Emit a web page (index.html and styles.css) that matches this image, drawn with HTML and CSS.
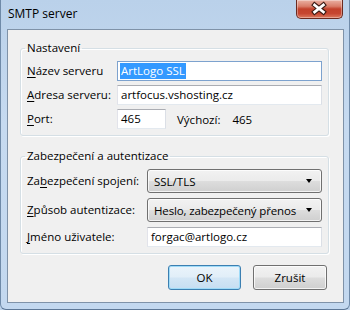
FILE: index.html
```html
<!DOCTYPE html>
<html lang="cs">
<head>
<meta charset="utf-8">
<title>SMTP server</title>
<link rel="stylesheet" href="styles.css">
</head>
<body>
<div class="window">
  <div class="titlebar">
    <span class="title">SMTP server</span>
    <div class="close">
      <svg width="47" height="19" viewBox="0 0 47 19">
        <g transform="translate(23.5 9.5)">
          <path d="M-4.5 -3.6 L4.5 3.6 M4.5 -3.6 L-4.5 3.6" stroke="#3b1a14" stroke-width="5" stroke-linecap="square" fill="none"/>
          <path d="M-4.5 -3.6 L4.5 3.6 M4.5 -3.6 L-4.5 3.6" stroke="#ffffff" stroke-width="2.8" stroke-linecap="square" fill="none"/>
        </g>
      </svg>
    </div>
  </div>
  <div class="client">
    <fieldset class="group g1">
      <legend>Nastavení</legend>
      <div class="row">
        <label class="lbl"><u>N</u>ázev serveru</label>
        <div class="input focus"><span class="sel">ArtLogo SSL</span></div>
      </div>
      <div class="row">
        <label class="lbl"><u>A</u>dresa serveru:</label>
        <div class="input">artfocus.vshosting.cz</div>
      </div>
      <div class="row">
        <label class="lbl"><u>P</u>ort:</label>
        <div class="input port">465</div>
        <span class="default-lbl">Výchozí:</span>
        <span class="default-val">465</span>
      </div>
    </fieldset>
    <fieldset class="group g2">
      <legend>Zabezpečení a autentizace</legend>
      <div class="row">
        <label class="lbl">Za<u>b</u>ezpečení spojení:</label>
        <div class="combo"><span>SSL/TLS</span><i class="arrow"></i></div>
      </div>
      <div class="row">
        <label class="lbl"><u>Z</u>působ autentizace:</label>
        <div class="combo"><span class="combo-txt">Heslo, zabezpečený přenos</span><i class="arrow"></i></div>
      </div>
      <div class="row">
        <label class="lbl"><u>J</u>méno uživatele:</label>
        <div class="input">forgac@artlogo.cz</div>
      </div>
    </fieldset>
    <div class="buttons">
      <button class="btn default">OK</button>
      <button class="btn">Zrušit</button>
    </div>
  </div>
</div>
</body>
</html>
```

FILE: styles.css
```css
html, body {
  margin: 0;
  padding: 0;
  background: #bcd2ea;
}
body {
  width: 350px;
  height: 310px;
  overflow: hidden;
  font-family: "Open Sans", "Noto Sans", sans-serif;
  font-size: 11.5px;
  color: #000;
}
.window {
  width: 350px;
  height: 310px;
  box-sizing: border-box;
  display: flex;
  flex-direction: column;
  background: linear-gradient(180deg, #bad1ea 0%, #c6daf0 40%, #c3d8ef 100%);
  border-left: 1px solid #6f8aa8;
  border-right: 1px solid #6f8aa8;
  border-bottom: 1px solid #5d7796;
  border-radius: 0 0 6px 6px;
  padding: 0 5px 6px 6px;
}
.titlebar {
  height: 29px;
  display: flex;
  align-items: flex-start;
  justify-content: space-between;
}
.title {
  margin-left: 1px;
  margin-top: 6px;
  font-size: 12px;
  line-height: 16px;
  color: #000;
}
.close {
  width: 47px;
  height: 19px;
  margin-right: 1px;
  box-sizing: border-box;
  border: 1px solid #6b2a20;
  border-top: none;
  border-radius: 0 0 5px 5px;
  background: linear-gradient(180deg, #eab1a3 0%, #d97d69 35%, #c2412b 50%, #c64631 75%, #dc7a5f 100%);
  box-shadow: inset 0 0 0 1px rgba(255,255,255,0.35);
  display: flex;
}
.close svg { display: block; margin: -1px 0 0 -1px; }
.client {
  flex: 1;
  border: 1px solid #7f92a8;
  background: #f0f0f0;
  display: flex;
  flex-direction: column;
  padding: 0 0 0 12px;
}
.group {
  width: 309px;
  box-sizing: border-box;
  margin: 0;
  border: 1px solid #d5dfe5;
  border-radius: 3px;
  box-shadow: inset 1px 1px 0 #fff, 1px 1px 0 #fff;
  padding: 5px 6px 6px 6px;
  display: flex;
  flex-direction: column;
}
.g1 { margin-top: 10px; gap: 4px; }
.g2 { margin-top: 12px; gap: 5px; }
.group legend {
  padding: 0 2px;
  margin-left: -2px;
  line-height: 16px;
  font-size: 11.5px;
}
.row {
  display: flex;
  align-items: center;
}
.lbl {
  line-height: 16px;
  white-space: nowrap;
}
.g1 .lbl { width: 90px; flex: none; }
.g2 .lbl { width: 120px; flex: none; }
.input {
  box-sizing: border-box;
  height: 20px;
  width: 205px;
  border: 1px solid #dbdfe6;
  border-top-color: #abadb3;
  border-left-color: #e2e3ea;
  border-right-color: #dbdfe6;
  border-bottom-color: #e3e9ef;
  background: #fff;
  padding: 0 0 0 3px;
  line-height: 17px;
  white-space: nowrap;
  overflow: hidden;
}
.g2 .input { width: 175px; }
.input.focus {
  border-color: #7da2ce;
  padding-left: 2px;
}
.sel {
  background: #3399ff;
  color: #fff;
  padding: 0 1px;
  display: inline-block;
  line-height: 16px;
}
.input.port { width: 49px; }
.default-lbl { margin-left: 11px; }
.default-val { margin-left: 12px; }
.combo {
  box-sizing: border-box;
  width: 175px;
  height: 24px;
  border: 1px solid #707070;
  border-radius: 3px;
  background: linear-gradient(180deg, #f2f2f2 0%, #ebebeb 48%, #dddddd 52%, #cfcfcf 100%);
  box-shadow: inset 0 0 0 1px rgba(255,255,255,0.75);
  display: flex;
  align-items: center;
  justify-content: space-between;
  padding: 0 9px 0 6px;
  white-space: nowrap;
}
.combo-txt { letter-spacing: -0.15px; }
.arrow {
  width: 0;
  height: 0;
  border-left: 3.5px solid transparent;
  border-right: 3.5px solid transparent;
  border-top: 4px solid #000;
}
.buttons {
  display: flex;
  justify-content: flex-end;
  gap: 12px;
  margin-top: 11px;
  padding-right: 16px;
}
.btn {
  box-sizing: border-box;
  height: 25px;
  width: 73px;
  margin: 0;
  font-family: inherit;
  font-size: 11.5px;
  color: #000;
  border: 1px solid #707070;
  border-radius: 3px;
  background: linear-gradient(180deg, #f2f2f2 0%, #ebebeb 48%, #dddddd 52%, #cfcfcf 100%);
  box-shadow: inset 0 0 0 1px rgba(255,255,255,0.75);
  padding: 0;
}
.btn + .btn { width: 74px; }
.btn.default {
  border-color: #3c7fb1;
  background: linear-gradient(180deg, #eaf4fb 0%, #e1eef8 48%, #d3e6f5 52%, #c6def2 100%);
  box-shadow: inset 0 0 0 1px #9fdbf8;
}
u { text-decoration-thickness: 1px; text-underline-offset: 2px; }
```
